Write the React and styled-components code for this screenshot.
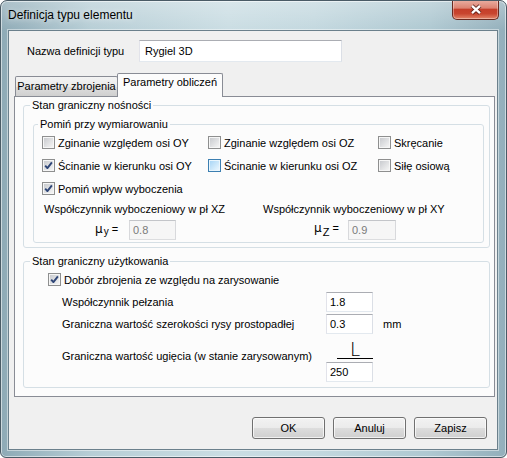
import React from 'react';
import styled, { createGlobalStyle } from 'styled-components';

const Global = createGlobalStyle`
  html, body { margin: 0; padding: 0; background: #ffffff; }
  body { font-family: "Liberation Sans", Arial, sans-serif; font-size: 11px; color: #000; }
  * { box-sizing: border-box; }
`;

const Window = styled.div`
  width: 507px;
  height: 458px;
  display: flex;
  flex-direction: column;
  border: 1px solid #4a5b66;
  border-radius: 7px 7px 6px 6px;
  padding: 0 8px 7px 7px;
  overflow: hidden;
  background:
    linear-gradient(to bottom, rgba(255,255,255,0.28), rgba(255,255,255,0) 30px),
    linear-gradient(to right, #8eaab6 0%, #b7ced6 18%, #cadde3 45%, #c3d8df 62%, #aec8d1 85%, #93afbb 100%);
  box-shadow: inset 0 0 0 1px rgba(255,255,255,0.55);
`;

const TitleBar = styled.div`
  height: 29px;
  flex: none;
  display: flex;
  align-items: flex-start;
`;

const Title = styled.div`
  padding-top: 7px;
  font-size: 12px;
  line-height: 15px;
  color: #000;
  text-shadow: 0 0 6px rgba(255,255,255,0.9);
`;

const CloseButton = styled.div`
  margin-left: auto;
  margin-right: -1px;
  margin-top: -1px;
  width: 47px;
  height: 20px;
  border: 1px solid #6a2a20;
  border-top: none;
  border-radius: 0 0 5px 5px;
  background: linear-gradient(to bottom, #eab0a3 0%, #dc8372 42%, #c53f2a 50%, #c8452f 72%, #e3876a 100%);
  box-shadow: inset 0 0 0 1px rgba(255,255,255,0.35);
  display: flex;
  align-items: center;
  justify-content: center;
`;

const Content = styled.div`
  flex: 1;
  display: flex;
  flex-direction: column;
  background: #f0f0f0;
  border: 1px solid #6b808c;
  box-shadow: 0 0 0 1px rgba(255,255,255,0.45);
`;

const NameRow = styled.div`
  display: flex;
  align-items: center;
  height: 22px;
  margin: 9px 0 0 18px;
`;

const NameLabel = styled.span`
  width: 112px;
  flex: none;
`;

const Field = styled.div`
  width: ${p => p.$w}px;
  height: ${p => p.$h}px;
  flex: none;
  display: flex;
  align-items: center;
  padding-left: ${p => p.$pl ?? 3}px;
  background: ${p => (p.$disabled ? '#f6f6f6' : '#ffffff')};
  color: ${p => (p.$disabled ? '#7a7a7a' : '#000')};
  border: 1px solid;
  border-color: ${p => (p.$disabled ? '#c3c5c9 #d8d9dc #dcdddf #d8d9dc' : '#abadb3 #dbdfe6 #e3e9ef #e2e3ea')};
`;

const TabStrip = styled.div`
  display: flex;
  align-items: flex-end;
  height: 25px;
  margin: 10px 0 -1px 6px;
`;

const Tab = styled.div`
  width: ${p => p.$w}px;
  height: ${p => (p.$active ? 24 : 20)}px;
  margin-bottom: ${p => (p.$active ? 0 : 1)}px;
  margin-left: ${p => (p.$active ? -1 : 0)}px;
  padding-top: ${p => (p.$active ? 2 : 3)}px;
  text-align: center;
  line-height: 13px;
  border: 1px solid #898c95;
  border-bottom: none;
  border-radius: 2px 2px 0 0;
  position: relative;
  z-index: ${p => (p.$active ? 1 : 0)};
  background: ${p => (p.$active
    ? '#fcfcfc'
    : 'linear-gradient(to bottom, #f3f3f3 0%, #ebebeb 50%, #dddddd 51%, #cfcfcf 100%)')};
`;

const Panel = styled.div`
  width: 481px;
  height: 301px;
  margin-left: 5px;
  border: 1px solid #898c95;
  background: #fcfcfc;
  display: flow-root;
`;

const Group = styled.fieldset`
  margin: ${p => p.$m};
  padding: ${p => p.$pad};
  border: 1px solid #d5dfe5;
  border-radius: 3px;
  min-width: 0;
`;

const Legend = styled.legend`
  margin-left: ${p => p.$ml}px;
  padding: 0 2px;
  font-size: 11px;
  line-height: 13px;
`;

const CheckGrid = styled.div`
  display: grid;
  grid-template-columns: 166px 170px auto;
  grid-auto-rows: 23px;
  padding-left: 8px;
`;

const CheckRow = styled.div`
  padding-left: ${p => p.$indent}px;
`;

const CheckLabel = styled.label`
  display: flex;
  align-items: center;
  gap: 3px;
  white-space: nowrap;
  height: 23px;
`;

const Box = styled.span`
  width: 13px;
  height: 13px;
  flex: none;
  padding: 1px;
  display: flex;
  align-items: center;
  justify-content: center;
  border: 1px solid ${p => (p.$hover ? '#3c7fb1' : '#8e8f8f')};
  background: ${p => (p.$hover
    ? 'linear-gradient(135deg, #a9d6f6, #e9f6fe) content-box, #eaf6fd'
    : 'linear-gradient(135deg, #c9cbcf, #f4f4f4) content-box, #f6f6f6')};
  & svg { margin: -1px; flex: none; }
`;

const CoefGrid = styled.div`
  display: grid;
  grid-template-columns: 219px auto;
  padding: 0 0 2px 10px;
`;

const CoefCol = styled.div`
  display: flex;
  flex-direction: column;
`;

const CoefLabel = styled.div`
  line-height: 19px;
  white-space: nowrap;
`;

const MuRow = styled.div`
  display: flex;
  align-items: center;
  height: 21px;
  padding-left: 51px;
`;

const Mu = styled.span`
  width: 34px;
  flex: none;
  white-space: nowrap;
  font-family: "DejaVu Sans", sans-serif;
  font-size: 12px;
  & sub {
    font-family: "Liberation Sans", Arial, sans-serif;
    font-size: ${p => p.$subSize}px;
    vertical-align: ${p => p.$subDrop}px;
    margin-left: 1px;
  }
  & i {
    font-style: normal;
    font-family: "Liberation Sans", Arial, sans-serif;
    font-size: 11px;
    margin-left: 3px;
  }
`;

const SlsGrid = styled.div`
  display: grid;
  grid-template-columns: 254px 47px auto;
  grid-template-rows: 22px 22px 47px;
  column-gap: 10px;
  padding: 0 0 5px 38px;
  align-items: center;
`;

const SlsLabel = styled.div`
  white-space: nowrap;
  align-self: ${p => (p.$bottom ? 'end' : 'center')};
  padding-bottom: ${p => (p.$bottom ? 20 : 0)}px;
`;

const Stack = styled.div`
  display: flex;
  flex-direction: column;
  align-self: start;
`;

const Fraction = styled.div`
  width: 36px;
  height: 24px;
  margin-left: 11px;
  margin-bottom: 3px;
  border-bottom: 1px solid #000;
  display: flex;
  align-items: flex-end;
  justify-content: center;
  font-family: "Lato", "Open Sans", "Liberation Sans", sans-serif;
  font-weight: 300;
  font-size: 19px;
  line-height: 18px;
`;

const Footer = styled.div`
  display: flex;
  justify-content: flex-end;
  gap: 8px;
  margin-top: 20px;
  padding-right: 10px;
`;

const Button = styled.div`
  width: 73px;
  height: 22px;
  display: flex;
  align-items: center;
  justify-content: center;
  border: 1px solid #707070;
  border-radius: 3px;
  background: linear-gradient(to bottom, #f2f2f2 0%, #ebebeb 50%, #dddddd 51%, #cfcfcf 100%);
  box-shadow: inset 0 0 0 1px rgba(255,255,255,0.7);
`;

const Check = ({ checked, hover, children }) => (
  <CheckLabel>
    <Box $hover={hover}>
      {checked && (
        <svg width="11" height="11" viewBox="0 0 11 11">
          <path d="M2.2 5.6 L4.4 8.1 L8.9 2.4" fill="none" stroke="#2f4677" strokeWidth="1.9" strokeLinejoin="round" />
        </svg>
      )}
    </Box>
    <span>{children}</span>
  </CheckLabel>
);

export default function App() {
  return (
    <>
      <Global />
      <Window>
        <TitleBar>
          <Title>Definicja typu elementu</Title>
          <CloseButton>
            <svg width="14" height="11" viewBox="0 0 14 11">
              <path d="M3 1.8 L11 9.2 M11 1.8 L3 9.2" stroke="#4a1710" strokeOpacity="0.75" strokeWidth="4.2" />
              <path d="M3 1.8 L11 9.2 M11 1.8 L3 9.2" stroke="#ffffff" strokeWidth="2.3" />
            </svg>
          </CloseButton>
        </TitleBar>
        <Content>
          <NameRow>
            <NameLabel>Nazwa definicji typu</NameLabel>
            <Field $w={203} $h={22} $pl={5}>Rygiel 3D</Field>
          </NameRow>
          <TabStrip>
            <Tab $w={103}>Parametry zbrojenia</Tab>
            <Tab $active $w={106}>Parametry obliczeń</Tab>
          </TabStrip>
          <Panel>
            <Group $m="2px 4px 0 8px" $pad="0">
              <Legend $ml={6}>Stan graniczny nośności</Legend>
              <Group $m="6px 5px 4px 9px" $pad="0">
                <Legend $ml={4}>Pomiń przy wymiarowaniu</Legend>
                <CheckGrid>
                  <Check>Zginanie względem osi OY</Check>
                  <Check>Zginanie względem osi OZ</Check>
                  <Check>Skręcanie</Check>
                  <Check checked>Ścinanie w kierunku osi OY</Check>
                  <Check hover>Ścinanie w kierunku osi OZ</Check>
                  <Check>Siłę osiową</Check>
                  <Check checked>Pomiń wpływ wyboczenia</Check>
                </CheckGrid>
                <CoefGrid>
                  <CoefCol>
                    <CoefLabel>Współczynnik wyboczeniowy w pł XZ</CoefLabel>
                    <MuRow>
                      <Mu $subSize={10} $subDrop={-2}>μ<sub>y</sub><i>=</i></Mu>
                      <Field $w={47} $h={20} $disabled>0.8</Field>
                    </MuRow>
                  </CoefCol>
                  <CoefCol>
                    <CoefLabel>Współczynnik wyboczeniowy w pł XY</CoefLabel>
                    <MuRow>
                      <Mu $subSize={11} $subDrop={-4}>μ<sub>Z</sub><i>=</i></Mu>
                      <Field $w={48} $h={20} $disabled>0.9</Field>
                    </MuRow>
                  </CoefCol>
                </CoefGrid>
              </Group>
            </Group>
            <Group $m="7px 4px 0 8px" $pad="0">
              <Legend $ml={6}>Stan graniczny użytkowania</Legend>
              <CheckRow $indent={24}>
                <Check checked>Dobór zbrojenia ze względu na zarysowanie</Check>
              </CheckRow>
              <SlsGrid>
                <SlsLabel>Współczynnik pełzania</SlsLabel>
                <Field $w={47} $h={20}>1.8</Field>
                <span />
                <SlsLabel>Graniczna wartość szerokości rysy prostopadłej</SlsLabel>
                <Field $w={47} $h={20}>0.3</Field>
                <span>mm</span>
                <SlsLabel $bottom>Graniczna wartość ugięcia (w stanie zarysowanym)</SlsLabel>
                <Stack>
                  <Fraction>L</Fraction>
                  <Field $w={47} $h={20}>250</Field>
                </Stack>
                <span />
              </SlsGrid>
            </Group>
          </Panel>
          <Footer>
            <Button>OK</Button>
            <Button>Anuluj</Button>
            <Button>Zapisz</Button>
          </Footer>
        </Content>
      </Window>
    </>
  );
}
